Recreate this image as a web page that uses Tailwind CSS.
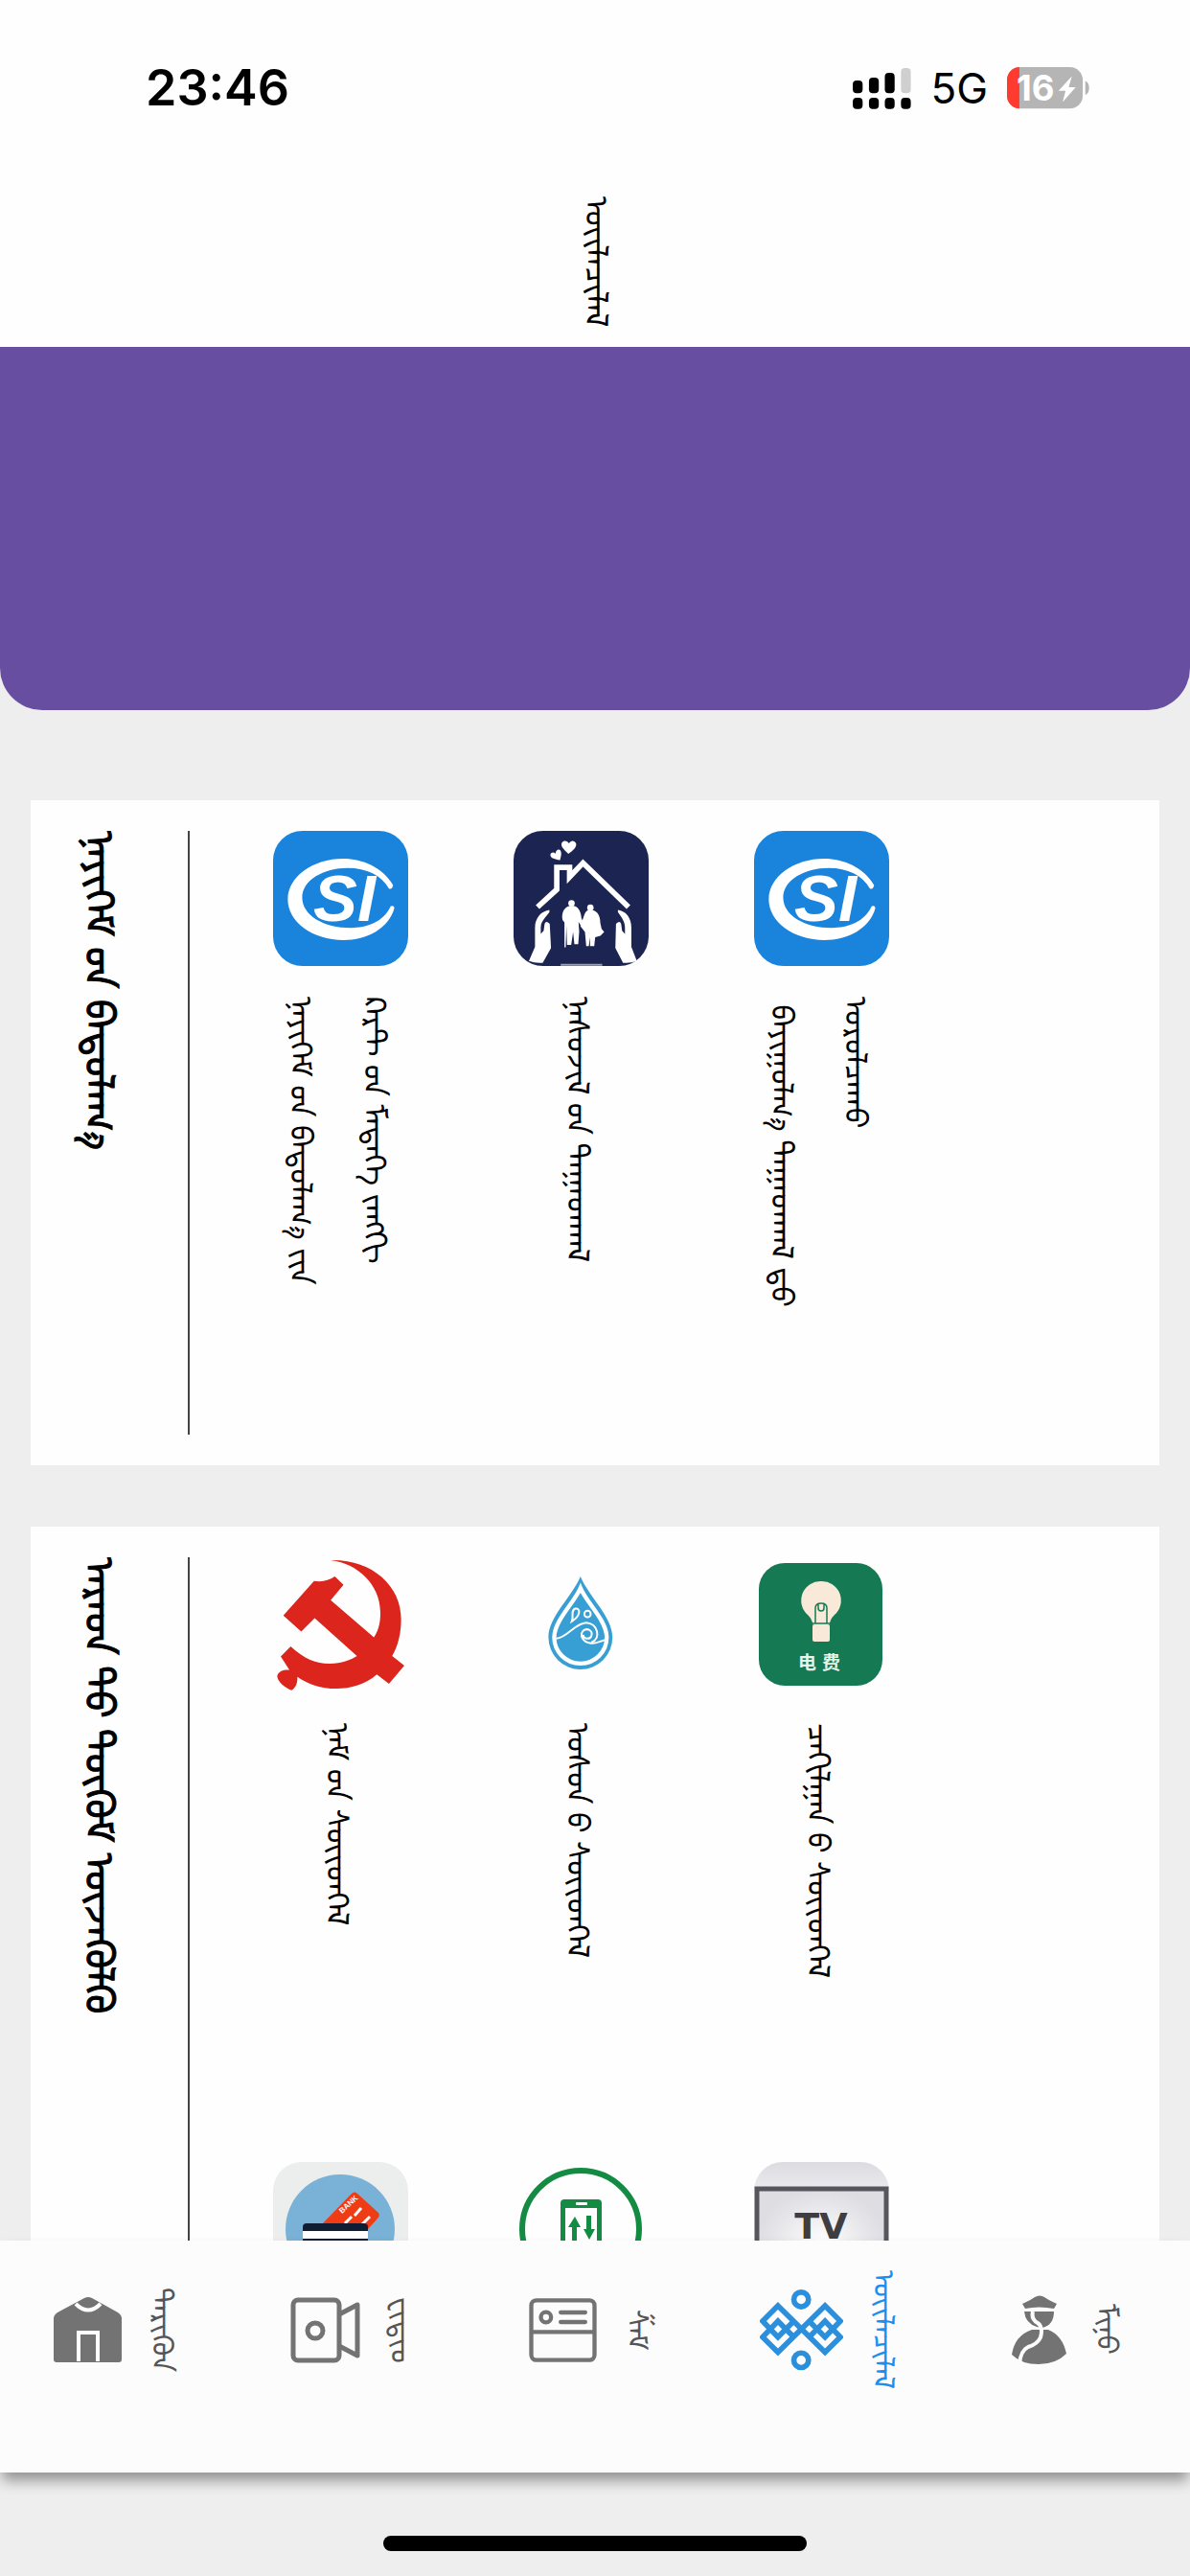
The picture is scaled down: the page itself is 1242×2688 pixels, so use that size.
<!DOCTYPE html>
<html lang="mn-Mong">
<head>
    <meta charset="UTF-8">
    <meta name="viewport" content="width=device-width, initial-scale=1.0">
    <title>ᠦᠢᠯᠡᠴᠢᠯᠡᠯ</title>
    <script src="https://cdn.jsdelivr.net/npm/@tailwindcss/browser@4"></script>
</head>
<body class="h-screen flex flex-col bg-[#eeeeee] text-black font-['Noto_Sans_Mongolian','Noto_Sans','Noto_Sans_CJK_SC',sans-serif]">

    <!-- Status bar and page title -->
    <header class="bg-[#fefefe] shrink-0">
        <div class="h-46 pl-38 pr-26 flex items-center justify-between font-['Inter',sans-serif]">
            <span class="text-[52px] leading-none font-semibold">23:46</span>
            <div class="flex items-center gap-5">
                <svg class="w-[61px] h-[43px]" viewBox="62 62 184 130">
                    <rect x="62" y="101" width="31" height="40" rx="12"/>
                    <rect x="113" y="92" width="31" height="49" rx="12"/>
                    <rect x="163" y="77" width="31" height="64" rx="12"/>
                    <rect x="214" y="62" width="31" height="79" rx="12" fill="#cfcfcf"/>
                    <rect x="62" y="156" width="31" height="35" rx="12"/>
                    <rect x="113" y="156" width="31" height="35" rx="12"/>
                    <rect x="163" y="156" width="31" height="35" rx="12"/>
                    <rect x="214" y="156" width="31" height="35" rx="12"/>
                </svg>
                <span class="text-[44px] leading-none">5G</span>
                <svg class="w-[87px] h-11" viewBox="544 60 262 132">
                    <rect x="544" y="60" width="238" height="130" rx="40" fill="#b5b5b5"/>
                    <path d="M583 60V190A40 40 0 0 1 544 150V100A40 40 0 0 1 583 60Z" fill="#ff3b30"/>
                    <path d="M790 104c16 3 16 40 0 43Z" fill="#b5b5b5"/>
                    <text x="574" y="166" font-size="110" font-weight="700" fill="#fff">16</text>
                    <path d="M748 88l-42 46h22l-9 36 41-47h-22Z" fill="#fff"/>
                </svg>
            </div>
        </div>
        <div class="h-[178px] pl-4 flex items-center justify-center">
            <h1 class="[writing-mode:vertical-lr] text-[33px] leading-none font-semibold">ᠦᠢᠯᠡᠴᠢᠯᠡᠯ</h1>
        </div>
    </header>

    <main class="flex-1 overflow-hidden">
        <div class="h-[379px] bg-[#674ea1] rounded-b-[44px]"></div>

        <section class="mx-8 mt-[94px] p-8 bg-[#fefefe] flex">
            <h2 class="w-[134px] shrink-0 border-r-2 border-[#444] [writing-mode:vertical-lr] text-[42px] leading-[98px] font-semibold [-webkit-text-stroke:1px]">ᠨᠡᠶᠢᠭᠡᠮ&#x202F;ᠦᠨ ᠪᠠᠲᠤᠯᠠᠭ᠎ᠠ</h2>
            <div class="ml-8 flex flex-wrap">
                <button class="w-[251px] h-[630px] flex flex-col items-center gap-8">
                    <svg class="size-[141px] shrink-0" viewBox="42 36 422 422">
                        <rect x="42" y="36" width="422" height="422" rx="92" fill="#1a84dc"/>
                        <path d="M417 206C385 150 320 123 262 123C165 123 88 180 88 250C88 320 165 377 262 377C335 377 405 340 421 276Q418 267 409 272C388 320 335 339 285 339C200 339 133 300 133 244C133 190 200 152 275 152C335 152 380 175 404 216Q414 220 417 206" fill="#fff"/>
                        <text x="168" y="317" font-family="Liberation Sans, sans-serif" font-size="206" font-weight="700" font-style="italic" fill="#fff">SI</text>
                    </svg>
                    <span class="pl-2 [writing-mode:vertical-lr] text-left text-[32px] leading-[77px] font-semibold">ᠨᠡᠶᠢᠭᠡᠮ&#x202F;ᠦᠨ ᠪᠠᠲᠤᠯᠠᠭ᠎ᠠ&#x202F;ᠶᠢᠨ<br>ᠺᠠᠷᠲ&#x202F;ᠤᠨ ᠮᠡᠳᠡᠭᠡ ᠵᠠᠩᠭᠢ</span>
                </button>
                <button class="w-[251px] h-[630px] flex flex-col items-center gap-8">
                    <svg class="size-[141px] shrink-0" viewBox="795 36 422 422">
                        <rect x="795" y="36" width="422" height="422" rx="92" fill="#1c2551"/>
                        <path d="M870 274L930 219V150H970V180L1012 136L1154 274" fill="none" stroke="#fff" stroke-width="17"/>
                        <path d="M966 108C950 92 941 84 946 73C952 64 963 66 968 75C974 64 986 65 990 75C994 86 980 98 966 108Z" fill="#fff"/>
                        <path d="M940 127C924 124 911 121 910 112C910 103 920 101 926 107C926 96 937 90 942 98C946 105 943 117 940 127Z" fill="#fff"/>
                        <path d="M907 283C882 286 862 308 862 338V398L843 442Q862 450 886 448L912 402L908 326Q896 314 892 326L889 348L880 358V338C880 318 898 304 907 290Z" fill="#fff"/>
                        <path transform="translate(2023 0) scale(-1 1)" fill="#fff" d="M902 283C877 286 860 308 860 338V398L843 442Q862 450 886 448L910 402L908 326Q896 314 892 326L889 348L880 358V338C880 318 893 304 902 290Z"/>
                        <circle cx="976" cy="262" r="10" fill="#fff"/>
                        <path d="M970 270h13c14 3 22 16 24 38l7 16-8 10-8-14 2 30-3 40h-12l-4-38-6 40h-13l-2-60-2 68h-4v-78l-6-8c-4-20 4-40 22-44Z" fill="#fff"/>
                        <circle cx="1035" cy="276" r="10" fill="#fff"/>
                        <path d="M1028 284h14c14 3 24 16 24 40l4 18 8 10-12 12-16 4-3 28h-13v-28l-4 28h-8l-4-44-14-18 10-30c4-12 8-18 14-20Z" fill="#fff"/>
                        <path d="M942 454h130" stroke="#9aa0b8" stroke-width="6"/>
                    </svg>
                    <span class="pl-2 [writing-mode:vertical-lr] text-left text-[32px] leading-[77px] font-semibold">ᠨᠠᠰᠤᠵᠢᠯ&#x202F;ᠤᠨ ᠳᠠᠭᠠᠳᠬᠠᠯ</span>
                </button>
                <button class="w-[251px] h-[630px] flex flex-col items-center gap-8">
                    <svg class="size-[141px] shrink-0" viewBox="42 36 422 422">
                        <rect x="42" y="36" width="422" height="422" rx="92" fill="#1a84dc"/>
                        <path d="M417 206C385 150 320 123 262 123C165 123 88 180 88 250C88 320 165 377 262 377C335 377 405 340 421 276Q418 267 409 272C388 320 335 339 285 339C200 339 133 300 133 244C133 190 200 152 275 152C335 152 380 175 404 216Q414 220 417 206" fill="#fff"/>
                        <text x="168" y="317" font-family="Liberation Sans, sans-serif" font-size="206" font-weight="700" font-style="italic" fill="#fff">SI</text>
                    </svg>
                    <span class="pl-2 [writing-mode:vertical-lr] text-left text-[32px] leading-[77px] font-semibold">&nbsp;ᠪᠠᠶᠢᠭᠤᠯᠭ᠎ᠠ ᠳᠠᠭᠠᠳᠬᠠᠯ&#x202F;ᠳᠤ<br>ᠣᠷᠤᠯᠴᠠᠬᠤ</span>
                </button>
            </div>
        </section>

        <section class="mx-8 mt-16 p-8 bg-[#fefefe] flex">
            <h2 class="w-[134px] shrink-0 border-r-2 border-[#444] [writing-mode:vertical-lr] text-[42px] leading-[98px] font-semibold [-webkit-text-stroke:1px]">ᠠᠷᠠᠳ ᠲᠤ᠌ ᠲᠦᠬᠦᠮ ᠦᠵᠡᠭᠦᠯᠬᠦ</h2>
            <div class="ml-8 flex flex-wrap">
                <button class="w-[251px] h-[631px] flex flex-col items-center gap-8">
                    <svg class="size-[141px] shrink-0" viewBox="42 42 422 422">
                        <path fill="#dc251c" d="M222 51C350 48 442 130 442 235C442 280 432 320 414 350L452 380L404 437L366 408C330 440 285 452 240 452C190 452 150 437 118 415C119 435 112 450 100 457C80 450 55 430 55 412C60 395 80 392 93 394L66 352L97 320C140 360 180 375 220 374C255 373 285 362 304 350L172 232L130 274L74 224L170 116C195 120 215 115 235 102L262 128L222 176L357 292C375 265 378 235 377 210C375 130 310 62 222 51Z"/>
                    </svg>
                    <span class="pl-2 [writing-mode:vertical-lr] text-left text-[32px] leading-[77px] font-semibold">ᠨᠠᠮ&#x202F;ᠤᠨ ᠰᠦᠢᠳᠬᠡᠯ</span>
                </button>
                <button class="w-[251px] h-[631px] flex flex-col items-center gap-8">
                    <svg class="size-[141px] shrink-0" viewBox="795 42 422 422">
                        <path d="M1004 102C1030 165 1104 228 1104 292A100 100 0 0 1 904 292C904 228 978 165 1004 102Z" fill="#379fd3"/>
                        <path d="M1004 138C1024 185 1086 240 1086 292A82 82 0 0 1 922 292C922 240 984 185 1004 138Z" fill="none" stroke="#fff" stroke-width="13"/>
                        <g fill="none" stroke="#fff" stroke-width="6">
                            <path d="M928 296C965 292 985 248 1022 246C1058 248 1070 296 1038 308"/>
                            <path d="M1082 300C1062 304 1052 314 1034 310C1012 306 1000 286 1012 272C1026 260 1044 272 1038 288C1032 300 1014 298 1012 284"/>
                            <path d="M977 242C984 226 972 208 988 202C1006 200 1004 226 977 242Z"/>
                            <circle cx="1026" cy="219" r="10"/>
                        </g>
                    </svg>
                    <span class="pl-2 [writing-mode:vertical-lr] text-left text-[32px] leading-[77px] font-semibold">ᠤᠰᠤᠨ&#x202F;ᠤ ᠰᠦᠢᠳᠬᠡᠯ</span>
                </button>
                <button class="w-[251px] h-[631px] flex flex-col items-center gap-8">
                    <svg class="size-[141px] shrink-0" viewBox="0 0 141 141">
                        <rect x="5" y="6" width="129" height="128" rx="27" fill="#157a54"/>
                        <path d="M70 25a20 20 0 0 1 14 35q-5 5-5 10h-18q0-5-5-10a20 20 0 0 1 14-35Z" fill="#f9e9d8"/>
                        <rect x="61" y="70" width="18" height="18" rx="2" fill="#f9e9d8"/>
                        <path d="M64 69V53q0-5 6-5t6 5v16M67 49v4q0 3 3 3t3-3v-4M60 69h20" fill="none" stroke="#157a54" stroke-width="1.5"/>
                        <text x="46" y="117" font-family="Noto Sans CJK SC, sans-serif" font-size="19" font-weight="700" fill="#e6f5e6">电</text>
                        <text x="71" y="117" font-family="Noto Sans CJK SC, sans-serif" font-size="19" font-weight="700" fill="#e6f5e6">费</text>
                    </svg>
                    <span class="pl-2 [writing-mode:vertical-lr] text-left text-[32px] leading-[77px] font-semibold">ᠴᠠᠬᠢᠯᠭᠠᠨ&#x202F;ᠤ ᠰᠦᠢᠳᠬᠡᠯ</span>
                </button>

                <button class="w-[251px] h-[631px] flex flex-col items-center gap-8">
                    <svg class="size-[141px] shrink-0" viewBox="0 0 141 141">
                        <rect width="141" height="141" rx="30" fill="#eceeed"/>
                        <circle cx="70" cy="70" r="57" fill="#79b2d6"/>
                        <path d="M50 66L82 33Q85 30 88 33L110 53Q112 56 109 59L90 80H50Z" fill="#f03c15"/>
                        <text transform="translate(72 54) rotate(-43)" font-family="Liberation Sans, sans-serif" font-size="8" font-weight="700" fill="#fff">BANK</text>
                        <path d="M75 64l7-7M85 56l7-8M92 66l9-9" stroke="#fff" stroke-width="3"/>
                        <rect x="31" y="64" width="68" height="45" rx="4" fill="#0e1d33"/>
                        <rect x="31" y="72" width="68" height="8" fill="#fff"/>
                    </svg>
                </button>
                <button class="w-[251px] h-[631px] flex flex-col items-center gap-8">
                    <svg class="size-[141px] shrink-0" viewBox="0 0 141 141">
                        <circle cx="70" cy="70" r="61" fill="none" stroke="#148b43" stroke-width="6"/>
                        <path d="M53 39h35q4 0 4 4v56H49V43q0-4 4-4Z" fill="#148b43"/>
                        <rect x="54" y="48" width="33" height="46" fill="#fefefe"/>
                        <rect x="65" y="42" width="12" height="3" rx="1" fill="#fefefe"/>
                        <path d="M64 57l6 11h-4v17h-5V68h-4ZM79 81l6-11h-4V56h-5v14h-3Z" fill="#148b43"/>
                    </svg>
                </button>
                <button class="w-[251px] h-[631px] flex flex-col items-center gap-8">
                    <svg class="size-[141px] shrink-0" viewBox="0 0 141 141">
                        <defs>
                            <radialGradient id="screen"><stop offset="0" stop-color="#fdfdfe"/><stop offset="1" stop-color="#dddde2"/></radialGradient>
                            <linearGradient id="lid" x2="0" y2="1"><stop offset="0" stop-color="#dcdce0"/><stop offset="1" stop-color="#ececf0"/></linearGradient>
                        </defs>
                        <path d="M0 30A30 30 0 0 1 30 0H111A30 30 0 0 1 141 30Z" fill="url(#lid)"/>
                        <rect x="3" y="28" width="135" height="110" fill="url(#screen)" stroke="#57565c" stroke-width="5"/>
                        <text x="70" y="80" text-anchor="middle" font-family="DejaVu Sans, sans-serif" font-size="38" font-weight="700" fill="#3e3e42">TV</text>
                    </svg>
                </button>
            </div>
        </section>
    </main>

    <!-- Tab bar -->
    <nav class="relative h-[242px] pb-14 shrink-0 bg-[#fcfcfc] shadow-[0_10px_14px_-2px_rgba(0,0,0,0.4)] grid grid-cols-5 text-[30px] text-[#555]">
        <button class="flex items-center justify-center gap-6 pl-2">
            <svg class="w-[71px] h-[68px]" viewBox="0 0 71 68">
                <path d="M32 1q4-2 8 0L67 16q4 3 4 6v43q0 3-3 3H3q-3 0-3-3V22q0-3 4-6Z" fill="#737373"/>
                <path d="M23 7q13 13 26 0M26 67V37h20v30" fill="none" stroke="#fff" stroke-width="4"/>
            </svg>
            <span class="[writing-mode:vertical-lr] leading-[50px]">ᠲᠡᠷᠢᠭᠦᠨ</span>
        </button>
        <button class="flex items-center justify-center gap-6 pl-2">
            <svg class="w-[73px] h-[69px]" viewBox="0 0 73 69" fill="none" stroke="#737373" stroke-width="5">
                <rect x="3" y="3" width="48" height="63" rx="5"/>
                <circle cx="26" cy="35" r="8"/>
                <path d="M51 18L70 8V61L51 51" stroke-linejoin="round"/>
            </svg>
            <span class="[writing-mode:vertical-lr] leading-[50px]">ᠸᠢᠳᠢᠣ᠋</span>
        </button>
        <button class="flex items-center justify-center gap-6 pl-2">
            <svg class="w-[71px] h-[67px]" viewBox="64 87 212 201" fill="none" stroke="#737373" stroke-width="13">
                <rect x="71" y="94" width="198" height="187" rx="16"/>
                <path d="M71 193H269"/>
                <path d="M163 132H240M163 162H240" stroke-linecap="round"/>
                <circle cx="117" cy="147" r="16"/>
            </svg>
            <span class="[writing-mode:vertical-lr] leading-[50px]">ᠱᠠᠮ</span>
        </button>
        <button class="flex items-center justify-center gap-6 pl-2 text-[#1c8ef0]">
            <svg class="w-[87px] h-[86px]" viewBox="780 58 262 258" fill="none" stroke="#2c8fdc" stroke-width="17">
                <circle cx="910" cy="92" r="23"/>
                <circle cx="910" cy="283" r="23"/>
                <path d="M887 160L837 210L789 160L837 112L985 258L1033 210L985 160L935 210"/>
                <path d="M887 210L837 160L789 210L837 258L985 112L1033 160L985 210L935 160"/>
            </svg>
            <span class="[writing-mode:vertical-lr] leading-[50px] font-semibold">ᠦᠢᠯᠡᠴᠢᠯᠡᠯ</span>
        </button>
        <button class="flex items-center justify-center gap-6 pl-2">
            <svg class="w-[57px] h-[72px]" viewBox="0 0 57 72">
                <path d="M11 9Q20 5 24 2Q29-1 34 2Q38 5 47 9L44 14Q28 11 14 14Z" fill="#737373"/>
                <path d="M13 17H44Q44 31 32 34L26 33Q14 29 13 17Z" fill="#737373"/>
                <path d="M21 36H38Q53 42 57 61Q46 72 28 72Q10 72 0 62Q3 42 21 36Z" fill="#737373"/>
                <path d="M22 17Q20 25 27 29Q33 33 30 44Q27 51 17 54Q9 58 8 72" fill="none" stroke="#fcfcfc" stroke-width="4"/>
            </svg>
            <span class="[writing-mode:vertical-lr] leading-[50px]">ᠮᠢᠨᠤ</span>
        </button>
    </nav>

    <footer class="h-27 shrink-0 flex items-end justify-center pb-[26px]">
        <div class="w-[442px] h-4 rounded-full bg-black"></div>
    </footer>
</body>
</html>
